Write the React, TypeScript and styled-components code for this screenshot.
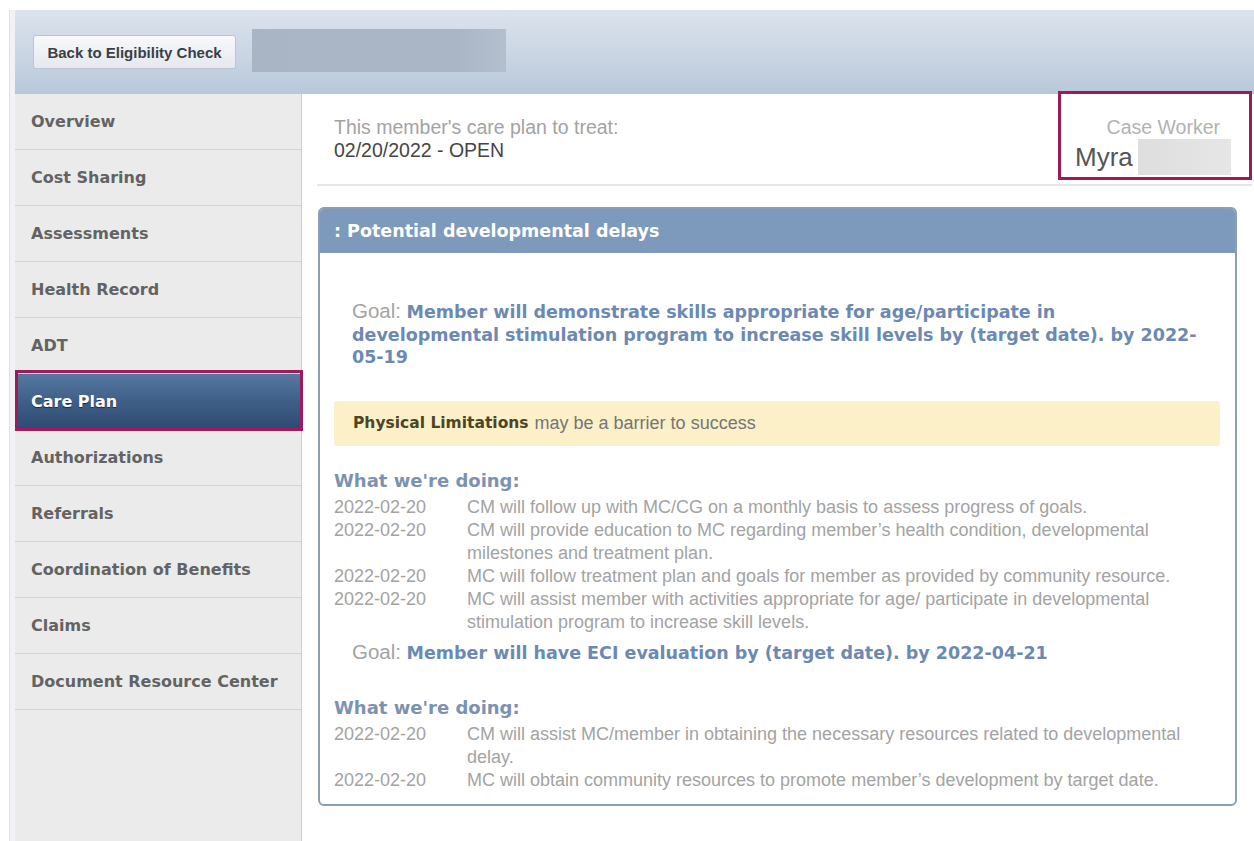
import styled, { createGlobalStyle } from "styled-components";

const GlobalStyle = createGlobalStyle`
  html, body {
    margin: 0;
    padding: 0;
    background: #ffffff;
    overflow: hidden;
  }
`;

const navItems = [
  "Overview",
  "Cost Sharing",
  "Assessments",
  "Health Record",
  "ADT",
  "Care Plan",
  "Authorizations",
  "Referrals",
  "Coordination of Benefits",
  "Claims",
  "Document Resource Center",
];

type Action = { date: string; text: string };

const firstActions: Action[] = [
  {
    date: "2022-02-20",
    text: "CM will follow up with MC/CG on a monthly basis to assess progress of goals.",
  },
  {
    date: "2022-02-20",
    text: "CM will provide education to MC regarding member\u2019s health condition, developmental milestones and treatment plan.",
  },
  {
    date: "2022-02-20",
    text: "MC will follow treatment plan and goals for member as provided by community resource.",
  },
  {
    date: "2022-02-20",
    text: "MC will assist member with activities appropriate for age/ participate in developmental stimulation program to increase skill levels.",
  },
];

const secondActions: Action[] = [
  {
    date: "2022-02-20",
    text: "CM will assist MC/member in obtaining the necessary resources related to developmental delay.",
  },
  {
    date: "2022-02-20",
    text: "MC will obtain community resources to promote member\u2019s development by target date.",
  },
];

const ActionList = ({ items }: { items: Action[] }) => (
  <>
    {items.map((a, i) => (
      <ActionRow key={i}>
        <span>{a.date}</span>
        <span>{a.text}</span>
      </ActionRow>
    ))}
  </>
);

export default function App() {
  return (
    <>
      <GlobalStyle />
      <Page>
        <Frame>
          <Header>
            <BackButton>Back to Eligibility Check</BackButton>
            <MemberBar />
          </Header>
          <Body>
            <Sidebar>
              {navItems.map((item) => (
                <NavItem key={item} $active={item === "Care Plan"}>
                  {item}
                </NavItem>
              ))}
            </Sidebar>
            <Main>
              <InfoRow>
                <PlanInfo>
                  <Muted>This member's care plan to treat:</Muted>
                  <Status>02/20/2022 - OPEN</Status>
                </PlanInfo>
                <CaseWorker>
                  <CaseLabel>Case Worker</CaseLabel>
                  <CaseName>
                    Myra
                    <NameMask />
                  </CaseName>
                </CaseWorker>
              </InfoRow>

              <Panel>
                <PanelHeader>: Potential developmental delays</PanelHeader>
                <PanelBody>
                  <Goal $top={48}>
                    <GoalLabel>Goal:</GoalLabel>{" "}
                    <strong>
                      Member will demonstrate skills appropriate for
                      age/participate in developmental stimulation program to
                      increase skill levels by (target date). by 2022-
                      <wbr />
                      05-19
                    </strong>
                  </Goal>
                  <Barrier>
                    <strong>Physical Limitations</strong> may be a barrier to
                    success
                  </Barrier>
                  <Doing $top={22}>What we're doing:</Doing>
                  <ActionList items={firstActions} />
                  <Goal $top={8}>
                    <GoalLabel>Goal:</GoalLabel>{" "}
                    <strong>
                      Member will have ECI evaluation by (target date). by
                      2022-04-21
                    </strong>
                  </Goal>
                  <Doing $top={31}>What we're doing:</Doing>
                  <ActionList items={secondActions} />
                </PanelBody>
              </Panel>
            </Main>
          </Body>
        </Frame>
      </Page>
    </>
  );
}

const Page = styled.div`
  height: 841px;
  padding: 10px 0 0 9px;
  box-sizing: border-box;
`;

const Frame = styled.div`
  width: 1245px;
  height: 100%;
  display: flex;
  flex-direction: column;
  background: #f0f2f5;
  border-left: 1px solid #dde1e6;
  padding-left: 5px;
  box-sizing: border-box;
`;

const Header = styled.div`
  height: 84px;
  flex-shrink: 0;
  display: flex;
  align-items: center;
  gap: 16px;
  padding-left: 18px;
  background: linear-gradient(180deg, #dbe3ed 0%, #c9d5e3 55%, #b8c8da 100%);
`;

const BackButton = styled.button`
  width: 203px;
  height: 34px;
  padding: 0;
  border: 1px solid #bcc6d2;
  border-radius: 3px;
  background: linear-gradient(180deg, #f7f9fb 0%, #e4e9ef 100%);
  font-family: "Liberation Sans", Arial, sans-serif;
  font-weight: bold;
  font-size: 15px;
  color: #3a3f46;
`;

const MemberBar = styled.div`
  width: 254px;
  height: 43px;
  margin-top: -3px;
  background: linear-gradient(90deg, #a9b4c4 0%, #aab6c6 80%, #b3bfcd 100%);
`;

const Body = styled.div`
  flex: 1;
  display: flex;
  min-height: 0;
`;

const Sidebar = styled.nav`
  width: 287px;
  flex-shrink: 0;
  background: #ebebeb;
  border-right: 1px solid #c9ced4;
  box-sizing: border-box;
`;

const NavItem = styled.div<{ $active?: boolean }>`
  position: relative;
  height: 56px;
  display: flex;
  align-items: center;
  padding-left: 16px;
  box-sizing: border-box;
  border-bottom: 1px solid #d4d4d4;
  font-family: "DejaVu Sans", Verdana, sans-serif;
  font-weight: bold;
  font-size: 16px;
  color: ${(p) => (p.$active ? "#ffffff" : "#636363")};
  background: ${(p) =>
    p.$active ? "linear-gradient(180deg, #56789f 0%, #3f5f88 50%, #2e4a70 100%)" : "transparent"};
  text-shadow: ${(p) => (p.$active ? "0 1px 1px rgba(0,0,0,0.55)" : "none")};

  &::after {
    content: "";
    display: ${(p) => (p.$active ? "block" : "none")};
    position: absolute;
    top: -4px;
    bottom: -2px;
    left: 0;
    right: -2px;
    border: 3px solid #9b1b5c;
  }
`;

const Main = styled.main`
  flex: 1;
  background: #ffffff;
  padding: 0 2px 0 15px;
  min-width: 0;
`;

const InfoRow = styled.div`
  height: 92px;
  display: flex;
  justify-content: space-between;
  align-items: flex-start;
  border-bottom: 2px solid #e6e6e6;
  box-sizing: border-box;
`;

const PlanInfo = styled.div`
  padding: 22px 0 0 17px;
  font-family: "Liberation Sans", Arial, sans-serif;
  font-size: 19.5px;
  line-height: 23px;
`;

const Muted = styled.div`
  color: #a3a3a3;
`;

const Status = styled.div`
  color: #454545;
`;

const CaseWorker = styled.div`
  width: 194px;
  height: 89px;
  margin-top: -3px;
  border: 3px solid #9b1b5c;
  box-sizing: border-box;
  font-family: "Liberation Sans", Arial, sans-serif;
`;

const CaseLabel = styled.div`
  padding: 22px 29px 0 0;
  text-align: right;
  font-size: 19.5px;
  line-height: 23px;
  color: #b2b2b2;
`;

const CaseName = styled.div`
  display: flex;
  align-items: center;
  gap: 5px;
  padding-left: 14px;
  font-size: 26px;
  line-height: 36px;
  color: #555555;
`;

const NameMask = styled.div`
  width: 93px;
  height: 36px;
  background: linear-gradient(90deg, #dedede 0%, #e6e6e6 100%);
`;

const Panel = styled.section`
  margin: 21px 15px 0 1px;
  border: 2px solid #8d9db3;
  border-radius: 6px;
  overflow: hidden;
`;

const PanelHeader = styled.div`
  height: 44px;
  display: flex;
  align-items: center;
  padding-left: 14px;
  background: #7d99bc;
  font-family: "DejaVu Sans", Verdana, sans-serif;
  font-weight: bold;
  font-size: 17.5px;
  color: #ffffff;
`;

const PanelBody = styled.div`
  padding: 0 15px 12px 14px;
`;

const Goal = styled.div<{ $top: number }>`
  margin: ${(p) => p.$top}px 15px 0 18px;
  font-family: "DejaVu Sans", Verdana, sans-serif;
  font-size: 17.5px;
  line-height: 22.5px;

  strong {
    color: #6b89b2;
  }
`;

const GoalLabel = styled.span`
  font-family: "Liberation Sans", Arial, sans-serif;
  font-size: 20.5px;
  line-height: 1;
  color: #a3a3a3;
`;

const Barrier = styled.div`
  margin-top: 32px;
  height: 45px;
  display: flex;
  align-items: center;
  gap: 6px;
  padding: 0 19px;
  background: #fcf0c9;
  border-radius: 3px;
  font-family: "Liberation Sans", Arial, sans-serif;
  font-size: 18px;
  color: #757575;

  strong {
    font-family: "DejaVu Sans", Verdana, sans-serif;
    font-size: 15.5px;
    color: #4d4524;
  }
`;

const Doing = styled.div<{ $top: number }>`
  margin-top: ${(p) => p.$top}px;
  padding-bottom: 2px;
  font-family: "DejaVu Sans", Verdana, sans-serif;
  font-weight: bold;
  font-size: 18px;
  line-height: 26px;
  color: #7c92b1;
`;

const ActionRow = styled.div`
  display: grid;
  grid-template-columns: 133px 1fr;
  font-family: "Liberation Sans", Arial, sans-serif;
  font-size: 18px;
  line-height: 23px;
  color: #a3a3a3;
`;
